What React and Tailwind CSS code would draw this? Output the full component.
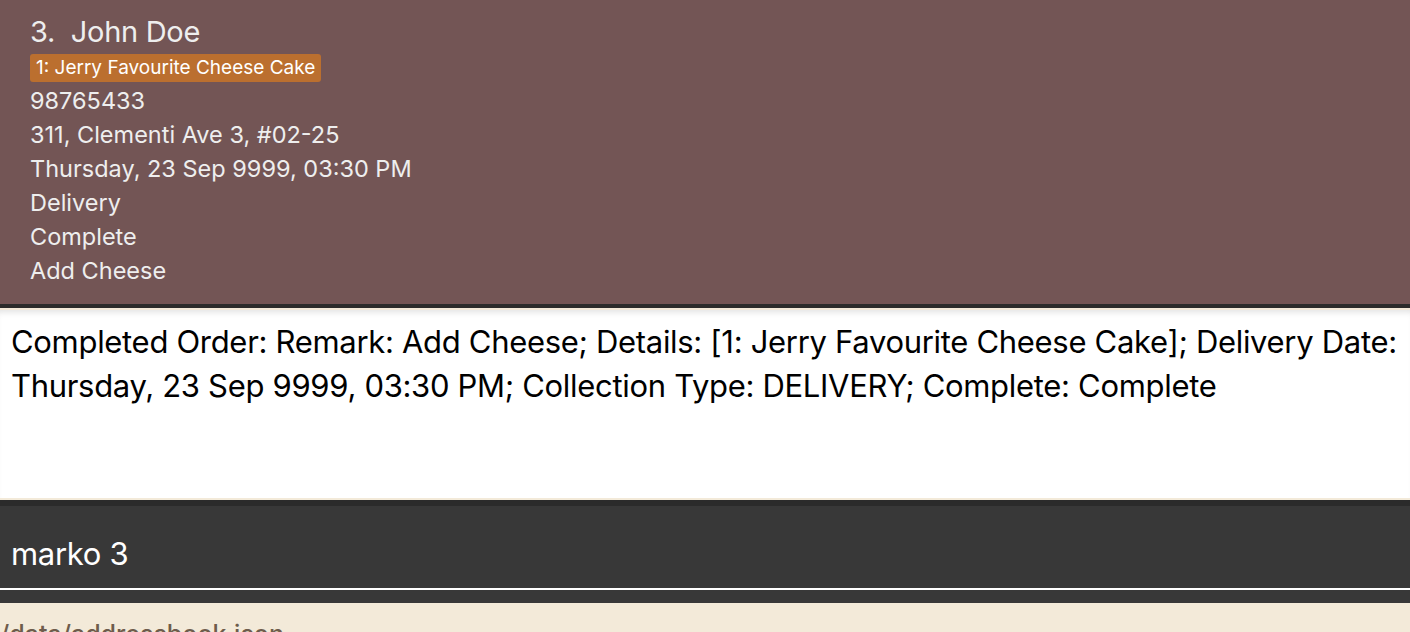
import React from 'react';

const details = [
  '98765433',
  '311, Clementi Ave 3, #02-25',
  'Thursday, 23 Sep 9999, 03:30 PM',
  'Delivery',
  'Complete',
  'Add Cheese',
];

const App = () => {
  return (
    <div className="w-[1410px] h-[632px] overflow-hidden flex flex-col font-['Inter',sans-serif]">
      {/* Order card */}
      <div className="h-[304px] shrink-0 bg-[#735555] pl-[30px] pt-[13px] text-[#eeeeee]">
        <div className="text-[29px] leading-[38px] tracking-[-0.01em]">3.&nbsp; John Doe</div>
        <div className="mt-[3px] inline-flex h-[28px] items-center rounded-[3px] bg-[#bb6f2f] px-[6px] text-[19px] text-white">
          1: Jerry Favourite Cheese Cake
        </div>
        <div className="mt-[2px] flex flex-col">
          {details.map((d) => (
            <div key={d} className="text-[23.5px] leading-[34px]">{d}</div>
          ))}
        </div>
      </div>
      <div className="h-[4px] shrink-0 bg-[#2b2b2b]" />
      <div className="h-[2px] shrink-0 bg-[#f3ead9]" />

      {/* Result display */}
      <div className="h-[188px] shrink-0 bg-white px-[11px] pt-[10px] text-black shadow-[inset_0_6px_6px_-4px_rgba(0,0,0,0.12)]">
        <p className="text-[31px] leading-[44px] tracking-[-0.01em]">
          Completed Order: Remark: Add Cheese; Details: [1: Jerry Favourite Cheese Cake]; Delivery Date: Thursday, 23 Sep 9999, 03:30 PM; Collection Type: DELIVERY; Complete: Complete
        </p>
      </div>
      <div className="h-[2px] shrink-0 bg-[#f3ead9]" />
      <div className="h-[6px] shrink-0 bg-[#2b2b2b]" />

      {/* Command box */}
      <div className="h-[82px] shrink-0 bg-[#383838] flex items-end px-[11px] pb-[12px]">
        <span className="text-[31px] leading-[44px] text-white tracking-[-0.01em]">marko 3</span>
      </div>
      <div className="h-[2px] shrink-0 bg-white" />
      <div className="h-[13px] shrink-0 bg-[#383838]" />

      {/* Status bar */}
      <div className="flex-1 bg-[#f3ead9] pt-[15px]">
        <span className="text-[25px] leading-[32px] text-[#6e5c4c] font-medium">/data/addressbook.json</span>
      </div>
    </div>
  );
};

export default App;
